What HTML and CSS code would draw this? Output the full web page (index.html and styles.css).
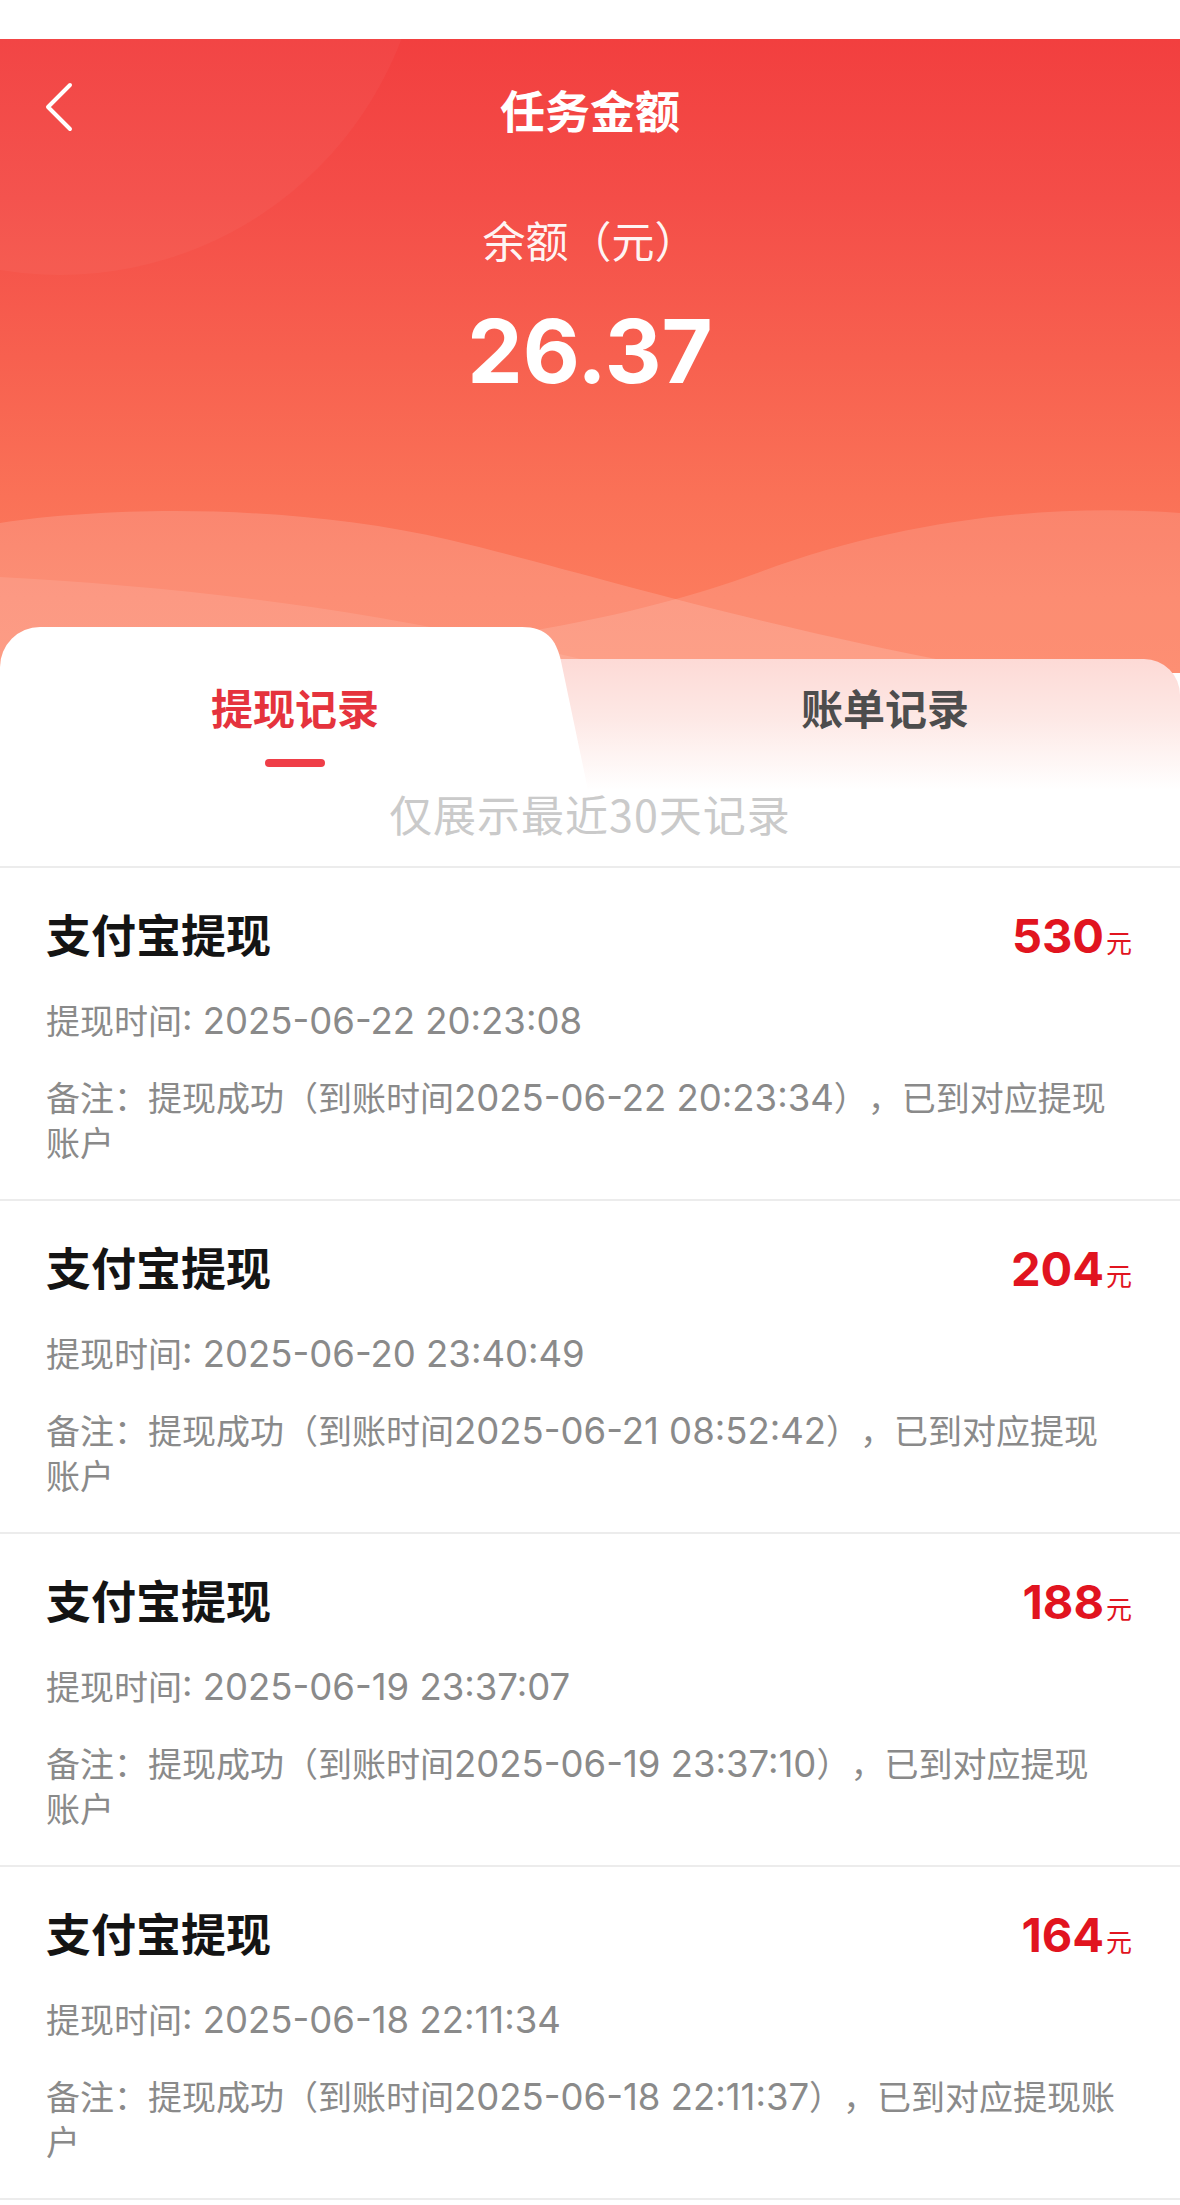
FILE: index.html
```html
<!DOCTYPE html>
<html lang="zh-CN">
<head>
<meta charset="utf-8">
<title>任务金额</title>
<link rel="stylesheet" href="styles.css">
</head>
<body>
<div class="page">
  <div class="statusbar"></div>
  <header class="hero">
    <svg class="hero-decor" viewBox="0 39 1180 634" preserveAspectRatio="none" aria-hidden="true">
      <circle cx="60" cy="-90" r="365" fill="#ffffff" fill-opacity="0.035"/>
      <path d="M0,523 C120,505 300,505 450,540 C600,575 820,650 1180,700 L1180,673 L0,673 Z" fill="#ffffff" fill-opacity="0.15"/>
      <path d="M1180,513 C1050,503 900,520 760,572 C600,632 380,660 0,690 L0,673 L1180,673 Z" fill="#ffffff" fill-opacity="0.13"/>
      <path d="M0,577 C200,588 420,612 700,690 L0,690 Z" fill="#ffffff" fill-opacity="0.1"/>
    </svg>
    <nav class="nav">
      <div class="nav-left">
        <svg class="back" width="30" height="50" viewBox="0 0 30 50" aria-hidden="true">
          <path d="M26 3 L4 25 L26 47" fill="none" stroke="#ffffff" stroke-width="4" stroke-linecap="round" stroke-linejoin="round"/>
        </svg>
      </div>
      <h1 class="nav-title">任务金额</h1>
      <div class="nav-right"></div>
    </nav>
    <p class="balance-label">余额（元）</p>
    <p class="balance-value">26.37</p>
  </header>

  <section class="tabs">
    <svg class="tabs-bg" viewBox="0 0 1180 163" preserveAspectRatio="none" aria-hidden="true">
      <defs>
        <linearGradient id="rtab" x1="0" y1="0" x2="0" y2="1">
          <stop offset="0" stop-color="#fddad6"/>
          <stop offset="0.45" stop-color="#fde8e5"/>
          <stop offset="1" stop-color="#ffffff"/>
        </linearGradient>
      </defs>
      <path d="M480,163 V32 H1144 A36,36 0 0 1 1180,68 V163 Z" fill="url(#rtab)"/>
      <path d="M0,163 V40 A40,40 0 0 1 40,0 H522 C546,0 556,12 561,34 L588,163 Z" fill="#ffffff"/>
    </svg>
    <div class="tab tab-active">
      <span class="tab-label">提现记录</span>
      <span class="indicator"></span>
    </div>
    <div class="tab">
      <span class="tab-label">账单记录</span>
    </div>
  </section>

  <p class="notice">仅展示最近30天记录</p>

  <ul class="records">
    <li class="record">
      <div class="record-head">
        <span class="record-title">支付宝提现</span>
        <span class="record-amount"><b>530</b><small>元</small></span>
      </div>
      <p class="record-time">提现时间<span class="num">: 2025-06-22 20:23:08</span></p>
      <p class="record-note">备注：提现成功（到账时间<span class="num">2025-06-22 20:23:34</span>），已到对应提现<br>账户</p>
    </li>
    <li class="record">
      <div class="record-head">
        <span class="record-title">支付宝提现</span>
        <span class="record-amount"><b>204</b><small>元</small></span>
      </div>
      <p class="record-time">提现时间<span class="num">: 2025-06-20 23:40:49</span></p>
      <p class="record-note">备注：提现成功（到账时间<span class="num">2025-06-21 08:52:42</span>），已到对应提现<br>账户</p>
    </li>
    <li class="record">
      <div class="record-head">
        <span class="record-title">支付宝提现</span>
        <span class="record-amount"><b>188</b><small>元</small></span>
      </div>
      <p class="record-time">提现时间<span class="num">: 2025-06-19 23:37:07</span></p>
      <p class="record-note">备注：提现成功（到账时间<span class="num">2025-06-19 23:37:10</span>），已到对应提现<br>账户</p>
    </li>
    <li class="record">
      <div class="record-head">
        <span class="record-title">支付宝提现</span>
        <span class="record-amount"><b>164</b><small>元</small></span>
      </div>
      <p class="record-time">提现时间<span class="num">: 2025-06-18 22:11:34</span></p>
      <p class="record-note">备注：提现成功（到账时间<span class="num">2025-06-18 22:11:37</span>），已到对应提现账<br>户</p>
    </li>
  </ul>
</div>
</body>
</html>
```

FILE: styles.css
```css
* {
  box-sizing: border-box;
}

html, body {
  margin: 0;
  padding: 0;
  background: #ffffff;
}

body {
  font-family: "Noto Sans CJK SC", "Noto Sans", sans-serif;
  color: #111111;
  text-spacing-trim: space-all;
}

.page {
  width: 1180px;
  overflow: hidden;
}

.statusbar {
  height: 39px;
  background: #ffffff;
}

.hero {
  position: relative;
  height: 634px;
  background: linear-gradient(180deg, #f23f3f 0%, #f44d48 25%, #f7604f 50%, #fa7157 72%, #fc7b5d 88%, #fd7f5f 100%);
  color: #ffffff;
  text-align: center;
  padding-top: 27px;
}

.hero-decor {
  position: absolute;
  inset: 0;
  width: 100%;
  height: 100%;
}

.nav {
  position: relative;
  display: grid;
  grid-template-columns: 1fr auto 1fr;
  align-items: center;
  height: 88px;
}

.nav-left {
  display: flex;
  align-items: center;
  padding-left: 44px;
  margin-bottom: 6px;
}

.back {
  display: block;
}

.nav-title {
  margin: 0;
  font-size: 45px;
  line-height: 88px;
  font-weight: 700;
}

.balance-label {
  position: relative;
  margin: 57px 0 0;
  font-size: 43px;
  line-height: 56px;
  font-weight: 400;
  color: rgba(255, 255, 255, 0.95);
}

.balance-value {
  position: relative;
  margin: 37px 0 0;
  font-family: Inter, "Liberation Sans", sans-serif;
  font-size: 88px;
  line-height: 94px;
  font-weight: 700;
}

.tabs {
  position: relative;
  margin-top: -46px;
  height: 163px;
  display: flex;
}

.tabs-bg {
  position: absolute;
  inset: 0;
  width: 100%;
  height: 100%;
}

.tab {
  position: relative;
  flex: 1;
  display: flex;
  flex-direction: column;
  align-items: center;
  padding-top: 52px;
}

.tab-label {
  font-size: 42px;
  line-height: 56px;
  font-weight: 700;
  color: #4d4d4d;
}

.tab-active .tab-label {
  color: #e5333d;
}

.indicator {
  margin-top: 24px;
  width: 60px;
  height: 8px;
  border-radius: 4px;
  background: #ef3e48;
}

.notice {
  margin: 0 0 30px;
  text-align: center;
  font-size: 43px;
  line-height: 46px;
  letter-spacing: 1px;
  color: #cacaca;
}

.records {
  list-style: none;
  margin: 0;
  padding: 0;
  border-top: 2px solid #ececec;
}

.record {
  padding: 38px 46px 38px 46px;
  border-bottom: 2px solid #ececec;
}

.record-head {
  display: flex;
  justify-content: space-between;
  align-items: baseline;
  height: 56px;
  padding-right: 2px;
}

.record-title {
  font-size: 45px;
  line-height: 56px;
  font-weight: 700;
  color: #141414;
}

.record-amount {
  color: #e1141f;
  line-height: 56px;
}

.record-amount b {
  font-family: Inter, "Liberation Sans", sans-serif;
  font-size: 47px;
  font-weight: 700;
}

.record-amount small {
  font-size: 26px;
  margin-left: 2px;
}

.record-time,
.record-note {
  margin: 0;
  font-size: 34px;
  line-height: 43px;
  color: #8a8a8a;
  white-space: nowrap;
}

.num {
  font-family: Inter, "Liberation Sans", sans-serif;
  font-size: 36.5px;
  line-height: 43px;
}

.record-time {
  margin-top: 36px;
}

.record-note {
  margin-top: 32px;
  height: 86px;
}
```
